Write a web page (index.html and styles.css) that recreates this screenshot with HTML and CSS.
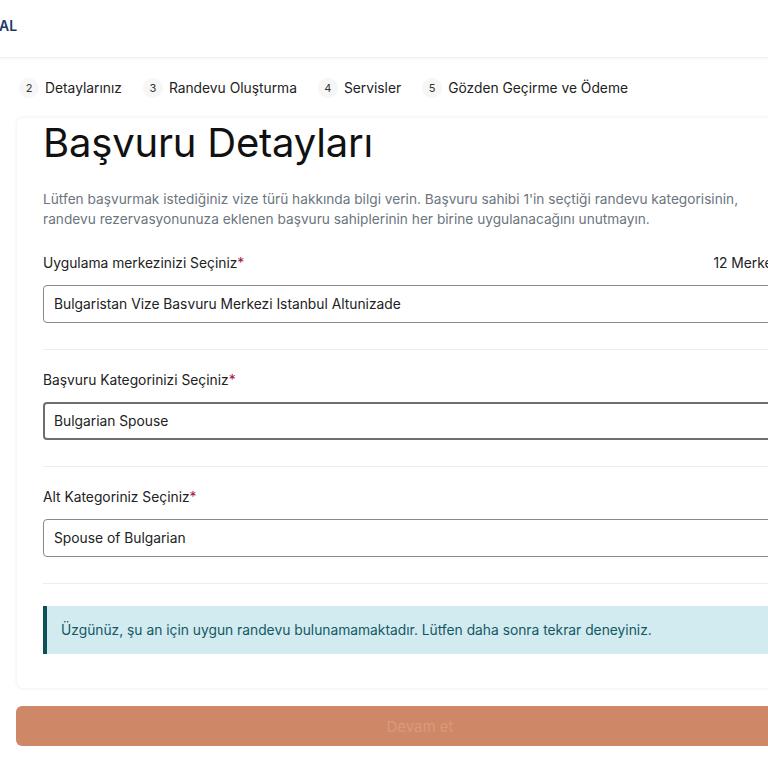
FILE: index.html
```html
<!DOCTYPE html>
<html lang="tr">
<head>
  <meta charset="UTF-8">
  <meta name="viewport" content="width=device-width, initial-scale=1.0">
  <title>Başvuru Detayları</title>
  <link rel="stylesheet" href="styles.css">
</head>
<body>
  <header class="topbar">
    <span class="logo">AL</span>
  </header>

  <main class="page">
    <ol class="steps">
      <li><span class="step-num">2</span>Detaylarınız</li>
      <li><span class="step-num">3</span>Randevu Oluşturma</li>
      <li><span class="step-num">4</span>Servisler</li>
      <li><span class="step-num">5</span>Gözden Geçirme ve Ödeme</li>
    </ol>

    <section class="card">
      <h1>Başvuru Detayları</h1>
      <p class="intro">Lütfen başvurmak istediğiniz vize türü hakkında bilgi verin. Başvuru sahibi 1'in seçtiği randevu kategorisinin, randevu rezervasyonunuza eklenen başvuru sahiplerinin her birine uygulanacağını unutmayın.</p>

      <div class="field">
        <div class="label-row">
          <label>Uygulama merkezinizi Seçiniz<span class="req">*</span></label>
          <span class="count">12 Merkez</span>
        </div>
        <div class="select">Bulgaristan Vize Basvuru Merkezi Istanbul Altunizade</div>
      </div>

      <div class="field">
        <div class="label-row">
          <label>Başvuru Kategorinizi Seçiniz<span class="req">*</span></label>
        </div>
        <div class="select active">Bulgarian Spouse</div>
      </div>

      <div class="field">
        <div class="label-row">
          <label>Alt Kategoriniz Seçiniz<span class="req">*</span></label>
        </div>
        <div class="select">Spouse of Bulgarian</div>
      </div>

      <div class="alert">Üzgünüz, şu an için uygun randevu bulunamamaktadır. Lütfen daha sonra tekrar deneyiniz.</div>
    </section>

    <button class="next" disabled>Devam et</button>
  </main>
</body>
</html>
```

FILE: styles.css
```css
* {
  box-sizing: border-box;
  margin: 0;
  padding: 0;
}
html, body {
  overflow: hidden;
}
body {
  font-family: Inter, 'Noto Sans', sans-serif;
  background: #fff;
  color: #212529;
  width: 768px;
  height: 768px;
}
.topbar {
  height: 58px;
  border-bottom: 1px solid #f0f0f0;
  box-shadow: 0 1px 3px rgba(0, 0, 0, 0.03);
  display: flex;
  align-items: center;
}
.logo {
  font-size: 14px;
  font-weight: 600;
  color: #1b3a66;
  margin-top: -6px;
  margin-left: -1px;
}
.page {
  width: 808px;
  margin-left: 16px;
}
.steps {
  list-style: none;
  display: flex;
  gap: 21px;
  height: 60px;
  align-items: center;
  padding-left: 3px;
}
.steps li {
  display: flex;
  align-items: center;
  gap: 6px;
  font-size: 13.8px;
  color: #222;
  white-space: nowrap;
}
.step-num {
  width: 20px;
  height: 20px;
  border-radius: 50%;
  background: #f6f6f6;
  display: flex;
  align-items: center;
  justify-content: center;
  font-size: 11px;
  color: #333;
}
.card {
  background: #fff;
  margin-left: 1px;
  border-radius: 6px;
  box-shadow: 0 0 4px rgba(0, 0, 0, 0.09);
  padding: 1px 26px 34px 26px;
}
h1 {
  font-size: 40px;
  font-weight: 400;
  color: #111;
  letter-spacing: -0.2px;
  line-height: 48px;
}
.intro {
  margin-top: 22px;
  max-width: 725px;
  font-size: 13.7px;
  line-height: 20px;
  color: #6c757d;
}
.field {
  padding: 26px 0 26px;
  border-bottom: 1px solid #ececec;
}
.field + .field {
  padding-top: 22px;
}
.label-row {
  display: flex;
  justify-content: space-between;
  font-size: 13.8px;
  color: #222;
  margin-bottom: 14px;
}
.count {
  padding-right: 18px;
}
.req {
  color: #a4123f;
}
.select {
  height: 38px;
  border: 1px solid #8a8a8a;
  border-radius: 4px;
  padding: 0 10px;
  display: flex;
  align-items: center;
  font-size: 13.8px;
  color: #222;
}
.select.active {
  border: 2px solid #6e6e6e;
  padding: 0 9px;
}
.alert {
  margin-top: 22px;
  height: 48px;
  background: #d1ebf0;
  border-left: 4px solid #0b5157;
  padding-left: 14px;
  display: flex;
  align-items: center;
  font-size: 13.8px;
  color: #145863;
}
.next {
  display: block;
  width: 100%;
  height: 40px;
  margin-top: 18px;
  border: none;
  border-radius: 6px;
  background: #cf8867;
  color: #d9997d;
  font-family: inherit;
  font-size: 15px;
}
```
